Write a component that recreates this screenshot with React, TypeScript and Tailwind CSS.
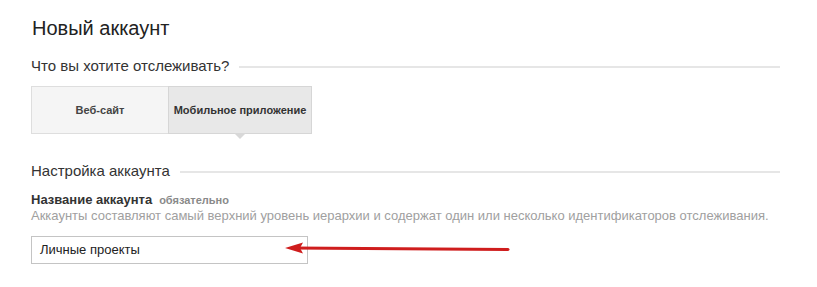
import React from "react";

function SectionHeading({ children }: { children: React.ReactNode }) {
  return (
    <div className="flex items-center gap-[10px] pr-[37px]">
      <h2 className="text-[15px] leading-5 text-[#333] whitespace-nowrap">{children}</h2>
      <div className="flex-1 h-[2px] bg-[#e6e6e6] mt-[1px]" />
    </div>
  );
}

export default function App() {
  return (
    <div
      className="w-[817px] h-[287px] bg-white pl-[31px] pt-[16px] relative overflow-hidden"
      style={{ fontFamily: "'Liberation Sans', Arial, sans-serif" }}
    >
      <h1 className="text-[20px] leading-6 text-[#222] pl-[1px]">Новый аккаунт</h1>

      <div className="mt-[16px]">
        <SectionHeading>Что вы хотите отслеживать?</SectionHeading>
      </div>

      {/* Property type selector */}
      <div className="mt-[10px] flex w-[281px] h-[48px]">
        <button className="w-[137px] h-full bg-[#f5f5f5] border border-[#dedede] border-r-0 text-[11px] font-bold text-[#444]">
          Веб-сайт
        </button>
        <button className="relative flex-1 h-full bg-[#e8e8e8] border border-[#d6d6d6] text-[11px] font-bold text-[#333]">
          Мобильное приложение
          <span className="absolute left-1/2 -translate-x-1/2 top-full w-0 h-0 border-x-[6px] border-x-transparent border-t-[6px] border-t-[#d8d8d8]" />
        </button>
      </div>

      <div className="mt-[27px]">
        <SectionHeading>Настройка аккаунта</SectionHeading>
      </div>

      <div className="mt-[11px] flex items-baseline gap-[7px]">
        <span className="text-[13px] leading-4 font-bold text-[#333]">Название аккаунта</span>
        <span className="text-[11px] leading-4 font-bold text-[#8a8a8a]">обязательно</span>
      </div>
      <p className="text-[13px] leading-4 text-[#a0a0a0]">
        Аккаунты составляют самый верхний уровень иерархии и содержат один или несколько идентификаторов отслеживания.
      </p>

      <div className="mt-[12px] w-[277px] h-[28px] border border-[#c4c4c4] flex items-center pl-[8px] text-[13px] text-[#222]">
        Личные проекты
      </div>

      {/* annotation arrow */}
      <svg className="absolute left-[283px] top-[240px]" width="228" height="16" viewBox="0 0 228 16">
        <line x1="10" y1="8" x2="225" y2="9.5" stroke="#cf1d1d" strokeWidth="3" strokeLinecap="round" />
        <path d="M2 8 L20 2.5 L17 8 L20 13.5 Z" fill="#cf1d1d" />
      </svg>
    </div>
  );
}
